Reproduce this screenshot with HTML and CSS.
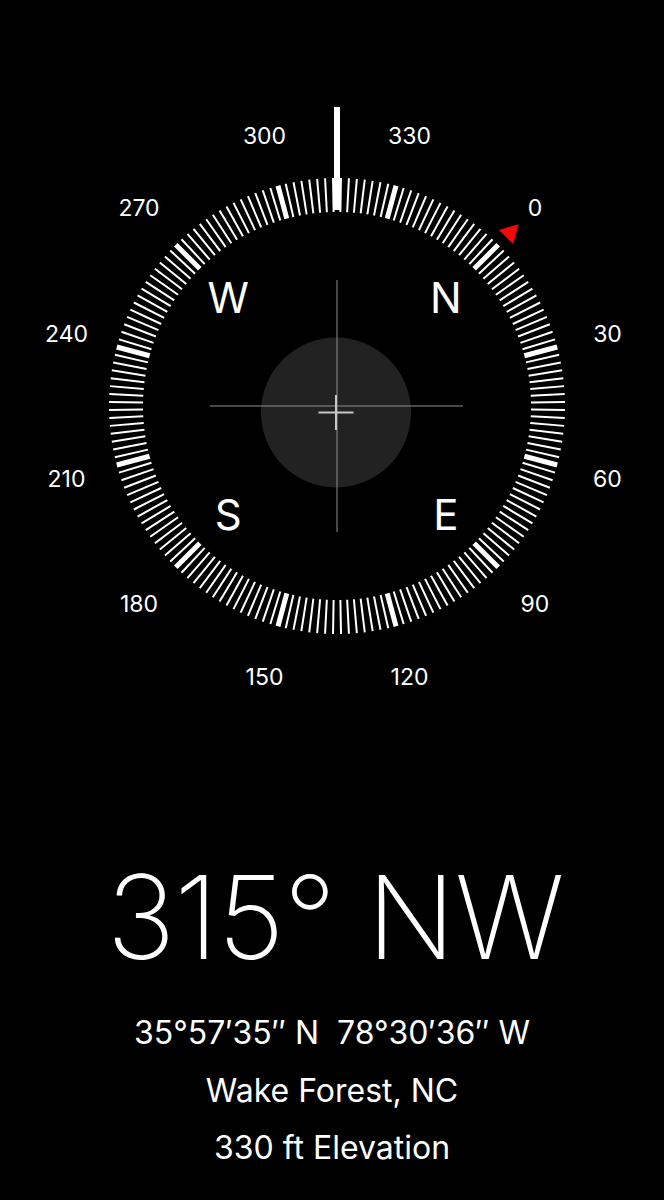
FILE: index.html
```html
<!DOCTYPE html>
<html lang="en">
<head>
    <meta charset="UTF-8">
    <title>Compass</title>
    <link rel="stylesheet" href="styles.css">
</head>
<body>
    <div class="compass">
        <svg class="dial" width="664" height="740" viewBox="0 0 664 740">
            <g transform="translate(337 406)">
                <g id="ticks"></g>
                <circle class="bubble" cx="-1" cy="6.5" r="75"></circle>
                <line class="cross" x1="-127" y1="0" x2="126" y2="0"></line>
                <line class="cross" x1="0" y1="-126" x2="0" y2="126"></line>
                <line class="level" x1="-18.5" y1="6.5" x2="16.5" y2="6.5"></line>
                <line class="level" x1="-1" y1="-11" x2="-1" y2="24"></line>
                <rect class="pointer" x="-3" y="-299" width="6" height="103"></rect>
                <polygon class="north" points="-10,-239 10,-239 0,-257" transform="rotate(45)"></polygon>
                <g id="labels"></g>
            </g>
        </svg>

        <div class="readout">
            <h1 class="heading">315° NW</h1>
            <p class="line">35°57′35″ N&nbsp;&nbsp;78°30′36″ W</p>
            <p class="line">Wake Forest, NC</p>
            <p class="line">330 ft Elevation</p>
        </div>
    </div>

    <script>
        const NS = "http://www.w3.org/2000/svg";
        const heading = 315;
        const ticks = document.getElementById("ticks");
        const labels = document.getElementById("labels");

        function polar(r, bearing) {
            const a = (bearing - heading) * Math.PI / 180;
            return [r * Math.sin(a), -r * Math.cos(a)];
        }

        // one tick every 2 degrees, thick ones every 30
        for (let b = 0; b < 360; b += 2) {
            const tick = document.createElementNS(NS, "line");
            tick.setAttribute("x1", 0);
            tick.setAttribute("y1", -228);
            tick.setAttribute("x2", 0);
            tick.setAttribute("y2", -194);
            tick.setAttribute("transform", "rotate(" + (b - heading) + ")");
            tick.setAttribute("class", b % 30 === 0 ? "tick major" : "tick");
            ticks.appendChild(tick);
        }

        for (let b = 0; b < 360; b += 30) {
            const [x, y] = polar(280, b);
            const t = document.createElementNS(NS, "text");
            t.setAttribute("x", x.toFixed(1));
            t.setAttribute("y", y.toFixed(1));
            t.setAttribute("class", "deg");
            t.textContent = b;
            labels.appendChild(t);
        }

        const cardinals = { N: 0, E: 90, S: 180, W: 270 };
        for (const name in cardinals) {
            const [x, y] = polar(154, cardinals[name]);
            const t = document.createElementNS(NS, "text");
            t.setAttribute("x", x.toFixed(1));
            t.setAttribute("y", y.toFixed(1));
            t.setAttribute("class", "cardinal");
            t.textContent = name;
            labels.appendChild(t);
        }
    </script>
</body>
</html>
```

FILE: styles.css
```css
body {
    background-color: #000;
    color: #fff;
    font-family: Inter, "Liberation Sans", sans-serif;
    margin: 0;
    padding: 0;
}

.compass {
    width: 664px;
}

.dial {
    display: block;
}

.tick {
    stroke: #fff;
    stroke-width: 2;
}

.tick.major {
    stroke-width: 5;
}

.bubble {
    fill: #222;
}

.cross {
    stroke: #8e8e8e;
    stroke-width: 1;
}

.level {
    stroke: #c8c8c8;
    stroke-width: 2;
}

.pointer {
    fill: #fff;
}

.north {
    fill: #f20a0a;
}

.deg {
    fill: #fff;
    font-size: 23px;
    text-anchor: middle;
    dominant-baseline: central;
}

.cardinal {
    fill: #fff;
    font-size: 42px;
    text-anchor: middle;
    dominant-baseline: central;
}

.readout {
    margin-top: 119px;
    text-align: center;
}

.heading {
    font-size: 116px;
    font-weight: 200;
    line-height: 1;
    letter-spacing: -1px;
    margin: 0 0 29px 6px;
}

.line {
    font-size: 32px;
    line-height: 57.5px;
    margin: 0;
}
```
